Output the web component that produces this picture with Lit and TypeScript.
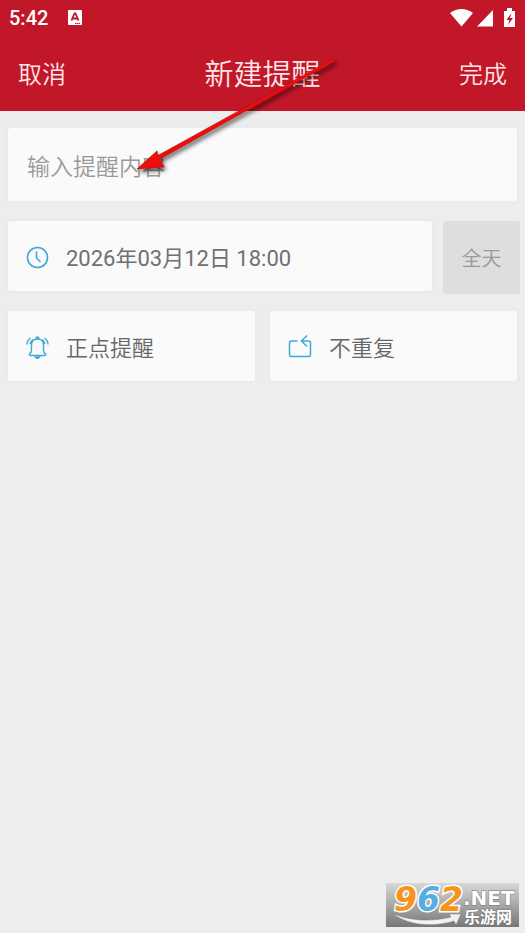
import { LitElement, html, css } from "lit";
import { customElement } from "lit/decorators.js";

@customElement("app-root")
export class AppRoot extends LitElement {
  static styles = css`
    :host {
      display: flex;
      flex-direction: column;
      position: relative;
      min-height: 100vh;
      box-sizing: border-box;
      background: #ededed;
      color: #666;
      font-family: Roboto, "Noto Sans CJK SC", sans-serif;
      font-weight: 350;
    }
    button,
    input {
      font: inherit;
      color: inherit;
      border: 0;
      margin: 0;
      padding: 0;
      background: none;
      box-sizing: border-box;
    }
    svg {
      display: block;
      flex: none;
    }
    header {
      background: #c11729;
      color: #ffe4e8;
    }
    .status {
      display: flex;
      align-items: center;
      height: 36px;
      padding: 0 8px 0 9px;
      color: #fff;
    }
    .time {
      font-size: 20px;
      font-weight: 500;
      line-height: 36px;
    }
    .app {
      margin-left: 19px;
    }
    .signals {
      display: flex;
      align-items: center;
      margin-left: auto;
    }
    .nav {
      display: grid;
      grid-template-columns: 1fr auto 1fr;
      align-items: center;
      box-sizing: border-box;
      height: 75px;
      padding: 2px 18px 0;
      font-size: 24px;
      line-height: 36px;
    }
    .done {
      justify-self: end;
    }
    h1 {
      margin: 0;
      font-size: 29px;
      font-weight: inherit;
      line-height: 44px;
    }
    main {
      display: flex;
      flex-direction: column;
      gap: 20px;
      padding: 17px 8px;
    }
    .card {
      background: #fafafa;
      border-radius: 3px;
      box-shadow: 0 0 3px 1px #e6e9ec;
    }
    .content {
      width: 100%;
      height: 73px;
      padding: 6px 19px 0;
      font-size: 23px;
      outline: 0;
    }
    .content::placeholder {
      color: #999;
      opacity: 1;
    }
    .row {
      display: flex;
      align-items: flex-start;
      height: 70px;
    }
    .when {
      gap: 11px;
      margin-right: -3px;
    }
    .options {
      gap: 15px;
    }
    .option {
      display: flex;
      flex: 1;
      align-items: center;
      gap: 17px;
      height: 70px;
      padding: 2px 18px 0;
      font-size: 22px;
      line-height: 32px;
      text-align: left;
    }
    .option span {
      padding-top: 4px;
    }
    .date {
      font-weight: 400;
      color: #707070;
    }
    .allday {
      width: 77px;
      height: 73px;
      border-radius: 3px;
      background: #dedede;
      color: #999;
      font-size: 20px;
    }
    .arrow {
      position: absolute;
      left: 130px;
      top: 50px;
      pointer-events: none;
    }
    .brand {
      position: absolute;
      right: 6px;
      bottom: 6px;
      overflow: visible;
    }
    .digits {
      font: italic bold 33px "DejaVu Sans", sans-serif;
      paint-order: stroke;
      stroke: #fff;
      stroke-width: 3px;
    }
    .net {
      font: bold 20px "DejaVu Sans", sans-serif;
    }
    .site {
      font: bold 16px "Noto Sans CJK SC", sans-serif;
    }
    .label {
      fill: #fff;
      stroke: #777;
      stroke-width: 1px;
      paint-order: stroke;
    }
  `;

  render() {
    return html`
      <header>
        <div class="status">
          <span class="time">5:42</span>
          <svg class="app" width="15" height="16" viewBox="0 0 15 16">
            <rect x="1" y="0" width="14" height="15" rx="1" fill="#fff" />
            <path d="M4.500 10.500 7.500 3.500h1l3 7M6 8.500h4" fill="none" stroke="#c11729" stroke-width="1.800" />
            <path d="M8 13.500h5" stroke="#c11729" stroke-dasharray="1.500 .5" />
          </svg>
          <div class="signals">
            <svg width="67" height="20" viewBox="0 0 67 20" fill="#fff">
              <path d="M0 5Q11.500-3 23 5L11.500 18.500Z" />
              <path d="M27 18.500 43 2V18.500Z" />
              <path d="M54 3h3V0h5v3h3v16H54Z" />
              <path d="m61.500 5-5 7h3l-1.500 5 5-7h-3Z" fill="#c11729" />
            </svg>
          </div>
        </div>
        <nav class="nav">
          <div><button>取消</button></div>
          <h1>新建提醒</h1>
          <button class="done">完成</button>
        </nav>
      </header>
      <main>
        <input class="card content" type="text" placeholder="输入提醒内容" aria-label="输入提醒内容" />
        <div class="row when">
          <button class="card option date">
            <svg width="23" height="23" viewBox="0 0 23 23" fill="none" stroke="#3fa9d8" stroke-width="1.600">
              <circle cx="11.500" cy="11.500" r="10" />
              <path d="M10.500 5.500V12l4 4" />
            </svg>
            <span>2026年03月12日 18:00</span>
          </button>
          <button class="allday">全天</button>
        </div>
        <div class="row options">
          <button class="card option">
            <svg width="23" height="23" viewBox="0 0 23 23" fill="none" stroke="#3fa9d8" stroke-width="1.400">
              <path d="M3.500 18q2-1.500 2-4V9q0-6 6-6t6 6v5q0 2.500 2 4 .5 1.500-1 1.500H4.500Q3 19.500 3.500 18ZM10 3q0-2 1.500-2T13 3M4.500 2Q1 4.500 1 8.500M7 3.500Q4.500 5 4 8M18.500 2Q22 4.500 22 8.500M16 3.500Q18.500 5 19 8" />
              <path d="M9.500 21h4q-2 2.500-4 0Z" fill="#3fa9d8" />
            </svg>
            <span>正点提醒</span>
          </button>
          <button class="card option">
            <svg width="24" height="24" viewBox="0 0 24 24" fill="none" stroke="#3fa9d8" stroke-width="1.500">
              <path d="M9.500 6H3.500Q1.500 6 1.500 8v11.500q0 2 2 2h17q2 0 2-2V8q0-2-2-2H14M19 .5 13.500 6l5.500 5.500" />
            </svg>
            <span>不重复</span>
          </button>
        </div>
      </main>
      <svg class="arrow" width="220" height="135" viewBox="0 0 220 135" aria-hidden="true">
        <defs>
          <filter id="shade" x="-10%" y="-10%" width="120%" height="130%">
            <feDropShadow dx="2" dy="3" stdDeviation="2" flood-color="#000" flood-opacity=".6" />
          </filter>
        </defs>
        <path d="M7 119 27 101 28 105.500 203 9 205 11 30 109 34 117Z" fill="#ee0d0d" stroke="#b51010" stroke-width=".7" filter="url(#shade)" />
      </svg>
      <svg class="brand" width="133" height="44" viewBox="0 0 133 44" role="img" aria-label="962.NET 乐游网">
        <defs>
          <linearGradient id="metal" x2="0" y2="1">
            <stop offset="0" stop-color="#d8d8d8" />
            <stop offset="1" stop-color="#777" />
          </linearGradient>
        </defs>
        <rect width="133" height="44" fill="url(#metal)" />
        <path d="M6 30C22 38 46 39 65 34L63 31 75 31 70 42 68 38C46 45 20 42 6 30Z" fill="#f2f2f2" stroke="#777" stroke-width=".5" />
        <text class="digits" x="8" y="28" fill="#f7941d">9<tspan fill="#55aee0">6</tspan>2</text>
        <text class="net label" x="77" y="22">.NET</text>
        <text class="site label" x="78" y="40">乐游网</text>
      </svg>
    `;
  }
}
